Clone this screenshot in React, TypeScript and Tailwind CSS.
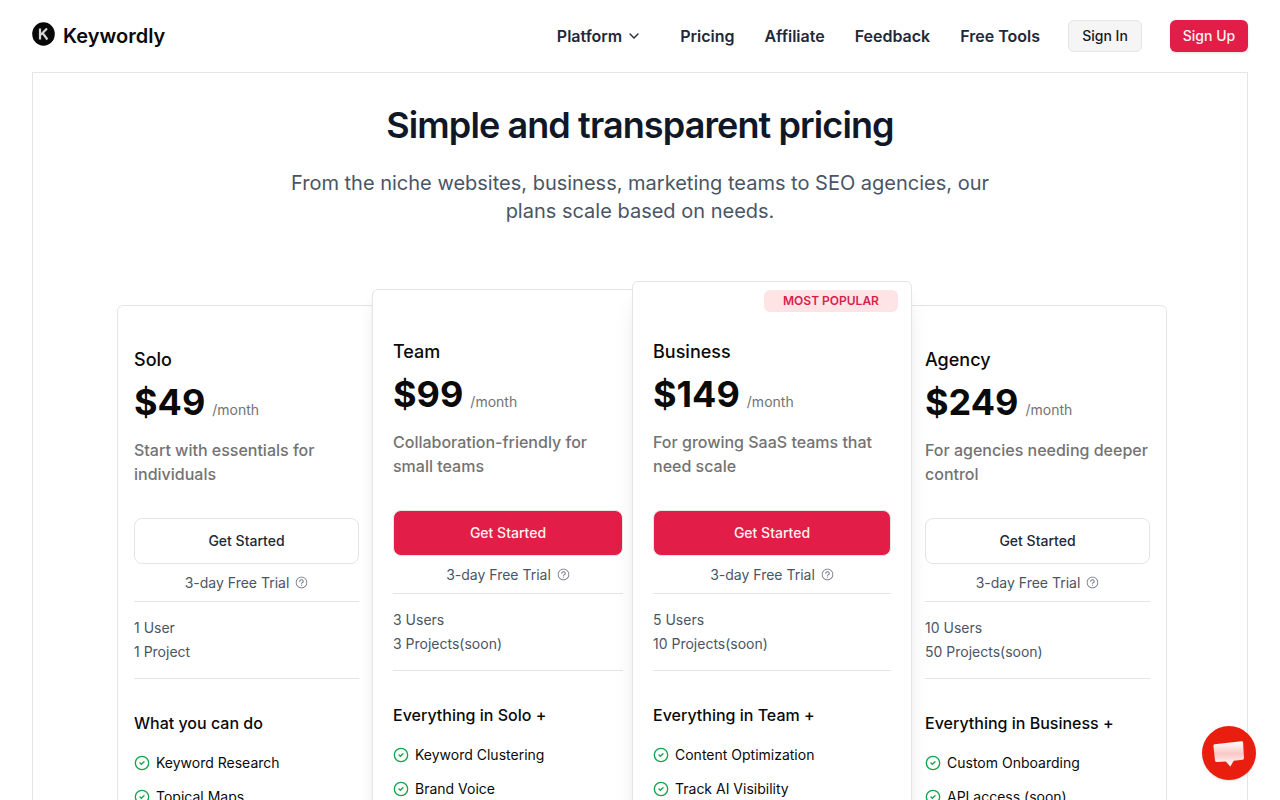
import React from 'react';
import clsx from 'clsx';
import { ChevronDown, CircleCheck } from 'lucide-react';
import { RxQuestionMarkCircled } from 'react-icons/rx';

interface Plan {
  name: string;
  price: string;
  description: string;
  limits: string[];
  heading: string;
  features: string[];
  layout: string;
  primary?: boolean;
  popular?: boolean;
}

const plans: Plan[] = [
  {
    name: 'Solo',
    price: '$49',
    description: 'Start with essentials for individuals',
    limits: ['1 User', '1 Project'],
    heading: 'What you can do',
    features: ['Keyword Research', 'Topical Maps'],
    layout: 'mt-6 px-4 pt-10',
  },
  {
    name: 'Team',
    price: '$99',
    description: 'Collaboration-friendly for small teams',
    limits: ['3 Users', '3 Projects(soon)'],
    heading: 'Everything in Solo +',
    features: ['Keyword Clustering', 'Brand Voice'],
    layout: 'relative z-10 -ml-1 -mr-2 mt-2 px-5 pt-12 shadow-lg',
    primary: true,
  },
  {
    name: 'Business',
    price: '$149',
    description: 'For growing SaaS teams that need scale',
    limits: ['5 Users', '10 Projects(soon)'],
    heading: 'Everything in Team +',
    features: ['Content Optimization', 'Track AI Visibility'],
    layout: 'relative z-20 -mx-1 px-5 pt-14 shadow-xl',
    primary: true,
    popular: true,
  },
  {
    name: 'Agency',
    price: '$249',
    description: 'For agencies needing deeper control',
    limits: ['10 Users', '50 Projects(soon)'],
    heading: 'Everything in Business +',
    features: ['Custom Onboarding', 'API access (soon)'],
    layout: 'mt-6 px-4 pt-10',
  },
];

const navLinks = ['Pricing', 'Affiliate', 'Feedback', 'Free Tools'];

const Logo: React.FC = () => (
  <a href="#" className="flex items-center gap-2 text-xl font-semibold text-neutral-950">
    <svg width="23" height="24" viewBox="0 0 23 24" className="mb-1" aria-hidden="true">
      <ellipse cx="11.5" cy="12" rx="11.3" ry="11.8" fill="#080808" />
      <path d="M8 6.5v11M15 6.5l-6.2 6.2M10.6 11L15.4 17.5" stroke="#d4d4d4" strokeWidth="2.2" fill="none" />
    </svg>
    Keywordly
  </a>
);

const Header: React.FC = () => (
  <header className="flex h-18 items-center justify-between px-8">
    <Logo />
    <div className="flex items-center gap-7">
      <nav className="flex items-center gap-[30px] font-semibold text-gray-800">
        <button className="mr-2 flex items-center gap-1">
          Platform
          <ChevronDown size={16} />
        </button>
        {navLinks.map(link => (
          <a key={link} href="#">{link}</a>
        ))}
      </nav>
      <button className="h-8 w-[74px] rounded-md border border-neutral-200 bg-neutral-100 text-sm font-medium text-neutral-900">Sign In</button>
      <button className="h-8 w-[78px] rounded-md bg-[#e11d48] text-sm font-medium text-rose-50 shadow-sm">Sign Up</button>
    </div>
  </header>
);

const PlanCard: React.FC<{ plan: Plan }> = ({ plan }) => (
  <div className={clsx('rounded-md border border-neutral-200 bg-white pb-10', plan.layout)}>
    {plan.popular && (
      <span className="absolute top-2 right-[13px] w-[134px] rounded-md bg-rose-100 py-[3px] text-center text-xs font-semibold text-[#d61f4c]">MOST POPULAR</span>
    )}
    <h2 className="text-lg font-medium text-neutral-950">{plan.name}</h2>
    <div className="mt-2 flex items-baseline gap-[7px]">
      <span className="text-4xl font-bold text-neutral-950">{plan.price}</span>
      <span className="text-sm text-neutral-500">/month</span>
    </div>
    <p className="mt-4 font-medium text-neutral-500">{plan.description}</p>
    <button
      className={clsx(
        'mt-8 h-[46px] w-full rounded-lg border border-neutral-200 text-sm font-medium',
        plan.primary ? 'bg-[#e11d48] text-rose-50' : 'bg-white text-gray-800'
      )}
    >
      Get Started
    </button>
    <div className="mt-[9px] flex items-center justify-center gap-1.5 border-b border-neutral-200 pb-2 text-sm text-gray-600">
      3-day Free Trial
      <RxQuestionMarkCircled size={13} className="mb-0.5 text-gray-500" />
    </div>
    <ul className="border-b border-neutral-200 py-3.5 text-sm leading-6 text-gray-600">
      {plan.limits.map(limit => <li key={limit}>{limit}</li>)}
    </ul>
    <h3 className="mt-8 font-medium text-neutral-950">{plan.heading}</h3>
    <ul className="mt-4.5 flex flex-col gap-3.5 text-sm text-neutral-950">
      {plan.features.map(feature => (
        <li key={feature} className="flex items-center gap-1.5">
          <CircleCheck size={16} className="text-[#16a34a]" />
          {feature}
        </li>
      ))}
    </ul>
  </div>
);

const ChatButton: React.FC = () => (
  <button aria-label="Open chat" className="fixed right-6 bottom-5 z-30 flex size-[54px] items-center justify-center rounded-full bg-[#e91e0f] shadow-sm">
    <svg width="54" height="54" viewBox="0 0 54 54">
      <defs>
        <linearGradient id="bubble" x1="0" y1="0" x2="0" y2="1">
          <stop offset="0" stopColor="#fff" />
          <stop offset="0.5" stopColor="#f9c8c6" />
          <stop offset="1" stopColor="#fff" />
        </linearGradient>
      </defs>
      <path
        d="M12.5 18.2L39.5 15.2Q41 15 41.1 16.5L42 32Q42 33.5 40.5 33.7L31.8 34.7L28.3 40.5L23.8 35.5L14.8 36Q13.2 36 13 34.5L11.4 19.8Q11.3 18.4 12.5 18.2Z"
        fill="url(#bubble)"
      />
    </svg>
  </button>
);

const App: React.FC = () => {
  return (
    <div className="h-screen overflow-x-hidden overflow-y-auto bg-white font-['Inter',sans-serif] [scrollbar-width:none]">
      <Header />
      <main className="mx-8 border border-neutral-200">
        <div className="mx-auto max-w-3xl pt-8 text-center">
          <h1 className="text-4xl font-semibold tracking-tight text-gray-900">Simple and transparent pricing</h1>
          <p className="mt-6 px-4 text-xl text-gray-600">
            From the niche websites, business, marketing teams to SEO agencies, our plans scale based on needs.
          </p>
        </div>
        <div className="mt-14 pl-1">
          <div className="mx-auto grid max-w-[1050px] grid-cols-[259fr_260fr_272fr_259fr]">
            {plans.map(plan => <PlanCard key={plan.name} plan={plan} />)}
          </div>
        </div>
      </main>
      <ChatButton />
    </div>
  );
};

export default App;
